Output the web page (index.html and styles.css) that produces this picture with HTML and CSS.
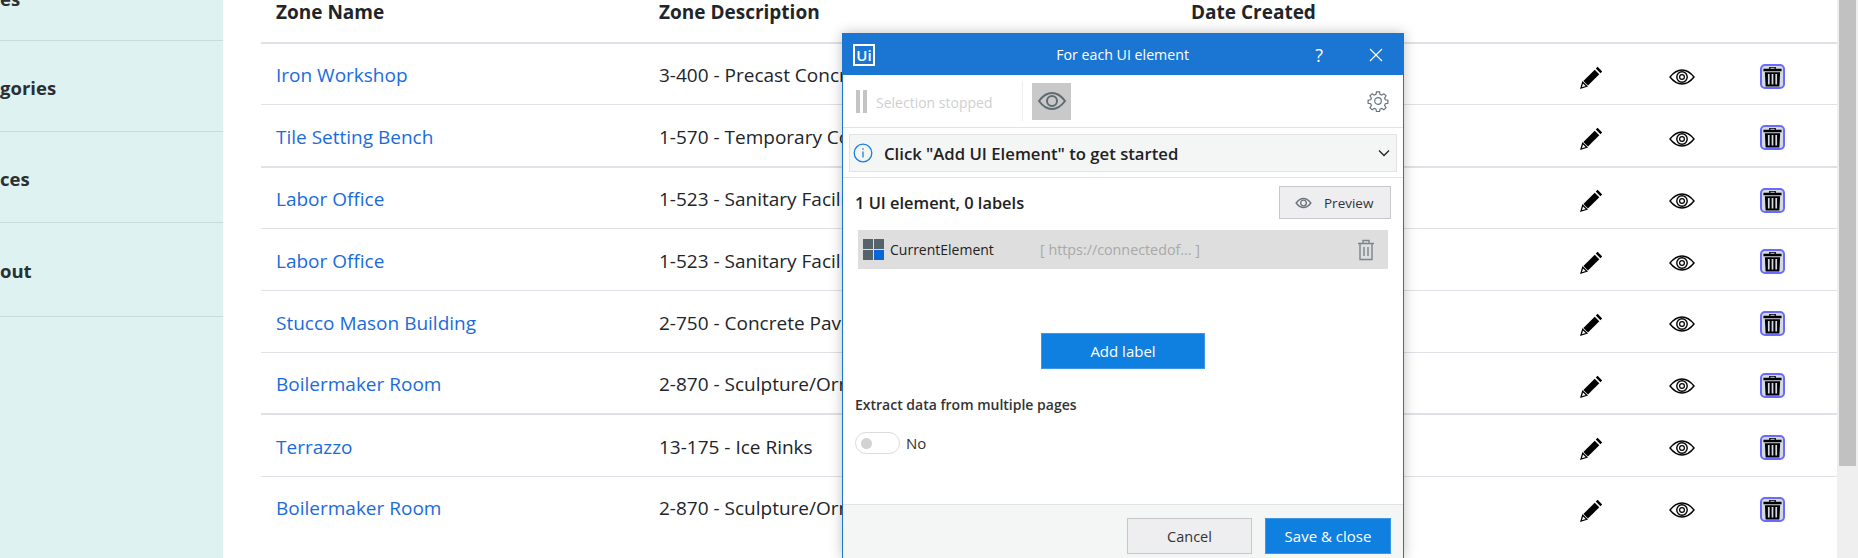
FILE: index.html
```html
<!DOCTYPE html>
<html lang="en">
<head>
  <meta charset="UTF-8" />
  <title>Zones</title>
  <link rel="stylesheet" href="styles.css">
</head>
<body>
  <svg class="defs" width="0" height="0">
    <symbol id="pencil" viewBox="0 0 24 24">
      <path d="M17.6 1.800 22.200 6.400 20.400 8.200 15.800 3.600Z"/>
      <path d="M14.700 4.700 19.300 9.300 8 20.600 3.400 16Z"/>
      <path d="M2.700 17.200 6.800 21.300 1 23Z" fill="#fff" stroke="#000" stroke-width="1.300"/>
    </symbol>
    <symbol id="eye" viewBox="0 0 26 16">
      <path d="M1 8C5 3 9 1 13 1s8 2 12 7c-4 5-8 7-12 7S5 13 1 8Z" fill="none" stroke="#000" stroke-width="1.400"/>
      <circle cx="13" cy="8" r="5.200" fill="none" stroke="#000" stroke-width="1.400"/>
      <circle cx="13" cy="8" r="2.400" fill="none" stroke="#000" stroke-width="1.200"/>
    </symbol>
    <symbol id="bin" viewBox="0 0 22 22">
      <path d="M7.500 1h7v1.800H20.500V5.500H1.500V2.800H7.500ZM8.800 1.900v.9h4.400v-.9Z" fill-rule="evenodd"/>
      <path d="M3 6.500H19L18.200 21.500H3.800ZM6.200 8.500V19.500H8V8.500ZM10.100 8.500V19.500H11.900V8.500ZM14 8.500V19.500H15.800V8.500Z" fill-rule="evenodd"/>
    </symbol>
  </svg>

  <div class="page">
    <aside class="sidebar">
      <div class="side-item first">es</div>
      <div class="side-item">gories</div>
      <div class="side-item">ces</div>
      <div class="side-item tall">out</div>
    </aside>

    <main class="content">
      <table class="zones">
        <thead>
          <tr><th class="col-name">Zone Name</th><th class="col-desc">Zone Description</th><th class="col-date">Date Created</th><th></th><th></th><th></th></tr>
        </thead>
        <tbody>
          <tr><td><a href="#">Iron Workshop</a></td><td>3-400 - Precast Concrete</td><td></td>
            <td class="act"><svg class="i-pencil"><use href="#pencil"/></svg></td><td class="act"><svg class="i-eye"><use href="#eye"/></svg></td><td class="act"><span class="bin-box"><svg class="i-bin"><use href="#bin"/></svg></span></td></tr>
          <tr class="thick"><td><a href="#">Tile Setting Bench</a></td><td>1-570 - Temporary Construction</td><td></td>
            <td class="act"><svg class="i-pencil"><use href="#pencil"/></svg></td><td class="act"><svg class="i-eye"><use href="#eye"/></svg></td><td class="act"><span class="bin-box"><svg class="i-bin"><use href="#bin"/></svg></span></td></tr>
          <tr><td><a href="#">Labor Office</a></td><td>1-523 - Sanitary Facilities</td><td></td>
            <td class="act"><svg class="i-pencil"><use href="#pencil"/></svg></td><td class="act"><svg class="i-eye"><use href="#eye"/></svg></td><td class="act"><span class="bin-box"><svg class="i-bin"><use href="#bin"/></svg></span></td></tr>
          <tr><td><a href="#">Labor Office</a></td><td>1-523 - Sanitary Facilities</td><td></td>
            <td class="act"><svg class="i-pencil"><use href="#pencil"/></svg></td><td class="act"><svg class="i-eye"><use href="#eye"/></svg></td><td class="act"><span class="bin-box"><svg class="i-bin"><use href="#bin"/></svg></span></td></tr>
          <tr><td><a href="#">Stucco Mason Building</a></td><td>2-750 - Concrete Paving</td><td></td>
            <td class="act"><svg class="i-pencil"><use href="#pencil"/></svg></td><td class="act"><svg class="i-eye"><use href="#eye"/></svg></td><td class="act"><span class="bin-box"><svg class="i-bin"><use href="#bin"/></svg></span></td></tr>
          <tr class="thick"><td><a href="#">Boilermaker Room</a></td><td>2-870 - Sculpture/Ornamental</td><td></td>
            <td class="act"><svg class="i-pencil"><use href="#pencil"/></svg></td><td class="act"><svg class="i-eye"><use href="#eye"/></svg></td><td class="act"><span class="bin-box"><svg class="i-bin"><use href="#bin"/></svg></span></td></tr>
          <tr><td><a href="#">Terrazzo</a></td><td>13-175 - Ice Rinks</td><td></td>
            <td class="act"><svg class="i-pencil"><use href="#pencil"/></svg></td><td class="act"><svg class="i-eye"><use href="#eye"/></svg></td><td class="act"><span class="bin-box"><svg class="i-bin"><use href="#bin"/></svg></span></td></tr>
          <tr class="last"><td><a href="#">Boilermaker Room</a></td><td>2-870 - Sculpture/Ornamental</td><td></td>
            <td class="act"><svg class="i-pencil"><use href="#pencil"/></svg></td><td class="act"><svg class="i-eye"><use href="#eye"/></svg></td><td class="act"><span class="bin-box"><svg class="i-bin"><use href="#bin"/></svg></span></td></tr>
        </tbody>
      </table>
    </main>

    <div class="scrollbar"><div class="thumb"></div></div>
  </div>

  <!-- Extension dialog -->
  <section class="dialog">
    <header class="dlg-title">
      <span class="ui-logo">Ui</span>
      <span class="dlg-name">For each UI element</span>
      <span class="dlg-help">?</span>
      <svg class="dlg-close" viewBox="0 0 14 14"><path d="M1 1 13 13M13 1 1 13" stroke="#fff" stroke-width="1.200" fill="none"/></svg>
    </header>

    <div class="dlg-tools">
      <span class="pause"><i></i><i></i></span>
      <span class="sel-text">Selection stopped</span>
      <span class="tool-sep"></span>
      <span class="eye-btn">
        <svg viewBox="0 0 30 20" width="30" height="20"><path d="M2 10C6 4.500 10 2 15 2s9 2.500 13 8c-4 5.500-8 8-13 8S6 15.500 2 10Z" fill="none" stroke="#5f6b73" stroke-width="2"/><circle cx="15" cy="10" r="5" fill="none" stroke="#5f6b73" stroke-width="2"/></svg>
      </span>
      <svg class="gear" viewBox="0 0 24 24"><path d="M10.300 2h3.400l.5 2.800 1.900.8 2.300-1.600 2.400 2.400-1.600 2.300.8 1.900 2.800.5v3.400l-2.800.5-.8 1.900 1.600 2.300-2.400 2.400-2.300-1.600-1.900.8-.5 2.800h-3.400l-.5-2.800-1.900-.8-2.300 1.600-2.400-2.400 1.600-2.300-.8-1.900-2.800-.5v-3.400l2.800-.5.8-1.900-1.600-2.300 2.400-2.400 2.300 1.600 1.900-.8Z" fill="none" stroke="#66727a" stroke-width="1.300"/><circle cx="12" cy="12" r="3.600" fill="none" stroke="#66727a" stroke-width="1.300"/></svg>
    </div>

    <div class="dlg-hint-wrap">
      <div class="dlg-hint">
        <svg class="info" viewBox="0 0 20 20"><circle cx="10" cy="10" r="8.800" fill="none" stroke="#1a7fe0" stroke-width="1.300"/><path d="M10 8.500v6M10 5.200v1.600" stroke="#1a7fe0" stroke-width="1.300" fill="none"/></svg>
        <span class="hint-text">Click "Add UI Element" to get started</span>
        <svg class="chev" viewBox="0 0 12 8"><path d="M1 1.500 6 6.500 11 1.500" stroke="#222" stroke-width="1.300" fill="none"/></svg>
      </div>
    </div>

    <div class="dlg-body">
      <div class="count-row">
        <span class="count">1 UI element, 0 labels</span>
        <button class="btn-preview">
          <svg viewBox="0 0 30 20" width="17" height="12"><path d="M2 10C6 4.500 10 2 15 2s9 2.500 13 8c-4 5.500-8 8-13 8S6 15.500 2 10Z" fill="none" stroke="#6b757c" stroke-width="2.400"/><circle cx="15" cy="10" r="5" fill="none" stroke="#6b757c" stroke-width="2.400"/></svg>
          Preview
        </button>
      </div>

      <div class="el-row">
        <span class="el-icon"><i></i><i></i><i></i><i class="blue"></i></span>
        <span class="el-name">CurrentElement</span>
        <span class="el-url">[ https://connectedof... ]</span>
        <svg class="el-bin" viewBox="0 0 18 22"><path d="M1 4.500h16M6 4.500V1.500h6v3M3 4.500V20.500h12V4.500M7 8v9M11 8v9" fill="none" stroke="#7b858c" stroke-width="1.400"/></svg>
      </div>

      <div class="add-row"><button class="btn-blue btn-add">Add label</button></div>

      <div class="extract">Extract data from multiple pages</div>
      <div class="toggle-row">
        <span class="toggle"><i></i></span>
        <span>No</span>
      </div>
    </div>

    <footer class="dlg-foot">
      <button class="btn-cancel">Cancel</button>
      <button class="btn-blue btn-save">Save &amp; close</button>
    </footer>
  </section>
</body>
</html>
```

FILE: styles.css
```css
html, body {
  margin: 0;
  height: 558px;
  overflow: hidden;
  background: #fff;
}
body {
  font-family: 'Open Sans', 'Noto Sans', sans-serif;
  color: #212529;
}
.defs {
  position: absolute;
}
.page {
  display: flex;
  height: 558px;
}

.sidebar {
  width: 223px;
  flex-shrink: 0;
  background: #def2f1;
  overflow: hidden;
  margin-right: 38px;
}
.side-item {
  height: 91px;
  display: flex;
  align-items: center;
  border-bottom: 1px solid #c8dcdb;
  padding-top: 2px;
  font-size: 18.500px;
  font-weight: 700;
  color: #2b2f33;
  box-sizing: border-box;
}
.side-item.first {
  align-items: flex-start;
  margin-top: -14px;
  height: 55px;
  padding-top: 0;
}
.side-item.tall {
  height: 94px;
}

.content {
  flex: 1;
  overflow: hidden;
}
.zones {
  width: 1576px;
  border-collapse: collapse;
  table-layout: fixed;
  font-size: 19px;
}
.zones th {
  height: 43px;
  padding: 0 0 0 15px;
  box-sizing: border-box;
  text-align: left;
  vertical-align: top;
  line-height: 24px;
  font-weight: 700;
  border-bottom: 2px solid #dee2e6;
}
.zones th.col-name { width: 383px; }
.zones th.col-desc { width: 532px; }
.zones th.col-date { width: 390px; }
.zones td {
  height: 61.900px;
  padding: 2px 0 0 15px;
  box-sizing: border-box;
  border-bottom: 1px solid #dee2e6;
  white-space: nowrap;
  overflow: hidden;
}
.zones tr.thick td { border-bottom-width: 2px; }
.zones tr.last td { border-bottom: 0; }
.zones a {
  color: #1a6bdd;
  text-decoration: none;
}
.zones td.act {
  padding: 2px 38px 0 0;
  text-align: center;
}
.i-pencil { width: 24px; height: 24px; vertical-align: middle; }
.i-eye { width: 26px; height: 16px; vertical-align: middle; }
.i-bin { width: 21px; height: 21px; display: block; }
.bin-box {
  display: inline-block;
  vertical-align: middle;
  border: 2px solid #6a6aff;
  border-radius: 5px;
  background: #d3dae4;
}

.scrollbar {
  position: absolute;
  top: 0;
  right: 0;
  width: 21px;
  height: 558px;
  background: #efefef;
}
.thumb {
  height: 466px;
  margin: 0 2px;
  background: #c1c1c1;
}

.dialog {
  position: absolute;
  left: 842px;
  top: 33px;
  width: 562px;
  height: 525px;
  box-sizing: border-box;
  background: #fff;
  border: 1px solid #1a76d2;
  border-bottom: 0;
  box-shadow: 0 0 12px rgba(0,0,0,0.25);
  display: flex;
  flex-direction: column;
  font-size: 14px;
}
.dlg-title {
  height: 41px;
  background: #1a76d2;
  color: #fff;
  display: flex;
  align-items: center;
  padding: 0 20px 0 10px;
  flex-shrink: 0;
}
.ui-logo {
  width: 18px;
  height: 18px;
  border: 2px solid #fff;
  font-size: 15px;
  font-weight: 600;
  line-height: 18px;
  text-align: center;
}
.dlg-name {
  flex: 1;
  text-align: center;
  font-size: 14.200px;
  padding-left: 55px;
}
.dlg-help {
  font-size: 18px;
  margin-right: 46px;
}
.dlg-close {
  width: 14px;
  height: 14px;
}
.dlg-tools {
  height: 52px;
  display: flex;
  align-items: center;
  padding: 0 14px 0 13px;
  border-bottom: 1px solid #e3e3e3;
  flex-shrink: 0;
}
.pause {
  display: flex;
  gap: 3px;
}
.pause i {
  width: 4px;
  height: 23px;
  background: #c4c4c4;
}
.sel-text {
  margin-left: 9px;
  padding-top: 2px;
  color: #cfcfcf;
  font-size: 14px;
  width: 146px;
}
.tool-sep {
  width: 1px;
  height: 40px;
  background: #efefef;
  margin-right: 9px;
}
.eye-btn {
  width: 39px;
  height: 37px;
  background: #c9c9c9;
  display: flex;
  align-items: center;
  justify-content: center;
}
.gear {
  width: 22px;
  height: 22px;
  margin-left: auto;
}
.dlg-hint-wrap {
  padding: 6px 6px 5px;
  border-bottom: 1px solid #e3e3e3;
  flex-shrink: 0;
}
.dlg-hint {
  height: 36px;
  background: #f4f6f6;
  border: 1px solid #e3e3e3;
  display: flex;
  align-items: center;
  padding: 0 6px 0 3px;
  font-size: 16.700px;
  font-weight: 600;
  color: #222;
}
.info {
  width: 20px;
  height: 20px;
  margin-right: 11px;
}
.hint-text { flex: 1; }
.chev {
  width: 12px;
  height: 8px;
}
.dlg-body {
  flex: 1;
  padding: 8px 12px 0;
}
.count-row {
  display: flex;
  align-items: center;
  justify-content: space-between;
  margin-bottom: 11px;
}
.count {
  font-size: 16.400px;
  font-weight: 600;
  color: #222;
}
.btn-preview {
  width: 112px;
  height: 33px;
  background: #eeeef0;
  border: 1px solid #c6c8c9;
  font: inherit;
  font-size: 13.500px;
  color: #333;
  display: flex;
  align-items: center;
  gap: 12px;
  padding: 0 0 0 15px;
}
.el-row {
  height: 39px;
  margin: 0 0 0 3px;
  background: #dedede;
  display: flex;
  align-items: center;
  padding: 0 13px 0 5px;
  width: 530px;
  box-sizing: border-box;
}
.el-icon {
  display: grid;
  grid-template-columns: 10px 10px;
  gap: 1px;
}
.el-icon i {
  height: 10px;
  background: #56636b;
}
.el-icon i.blue { background: #0a66d8; }
.el-name {
  margin-left: 6px;
  font-size: 14px;
  color: #222;
  width: 150px;
}
.el-url {
  font-size: 14.300px;
  color: #a9a9a9;
  flex: 1;
}
.el-bin {
  width: 18px;
  height: 22px;
}
.add-row {
  display: flex;
  justify-content: center;
  margin-top: 64px;
}
.btn-blue {
  background: #0f7fe0;
  border: 1px solid #3d97e8;
  color: #fff;
  font: inherit;
  font-size: 15px;
}
.btn-add {
  width: 164px;
  height: 36px;
}
.extract {
  margin-top: 26px;
  font-size: 14px;
  font-weight: 600;
  color: #333;
}
.toggle-row {
  display: flex;
  align-items: center;
  gap: 6px;
  margin-top: 18px;
  font-size: 15px;
  color: #333;
}
.toggle {
  width: 45px;
  height: 22px;
  box-sizing: border-box;
  border: 1px solid #dcdcdc;
  border-radius: 11px;
  display: flex;
  align-items: center;
  padding-left: 5px;
}
.toggle i {
  width: 11px;
  height: 11px;
  border-radius: 50%;
  background: #d2d2d2;
}
.dlg-foot {
  height: 54px;
  background: #f4f6f6;
  border-top: 1px solid #e3e3e3;
  display: flex;
  justify-content: flex-end;
  gap: 13px;
  padding: 13px 12px 0;
  box-sizing: border-box;
  flex-shrink: 0;
}
.btn-cancel {
  width: 125px;
  height: 36px;
  background: #eeeef0;
  border: 1px solid #c6c8c9;
  font: inherit;
  font-size: 14.500px;
  color: #333;
}
.btn-save {
  width: 126px;
  height: 36px;
}
```
